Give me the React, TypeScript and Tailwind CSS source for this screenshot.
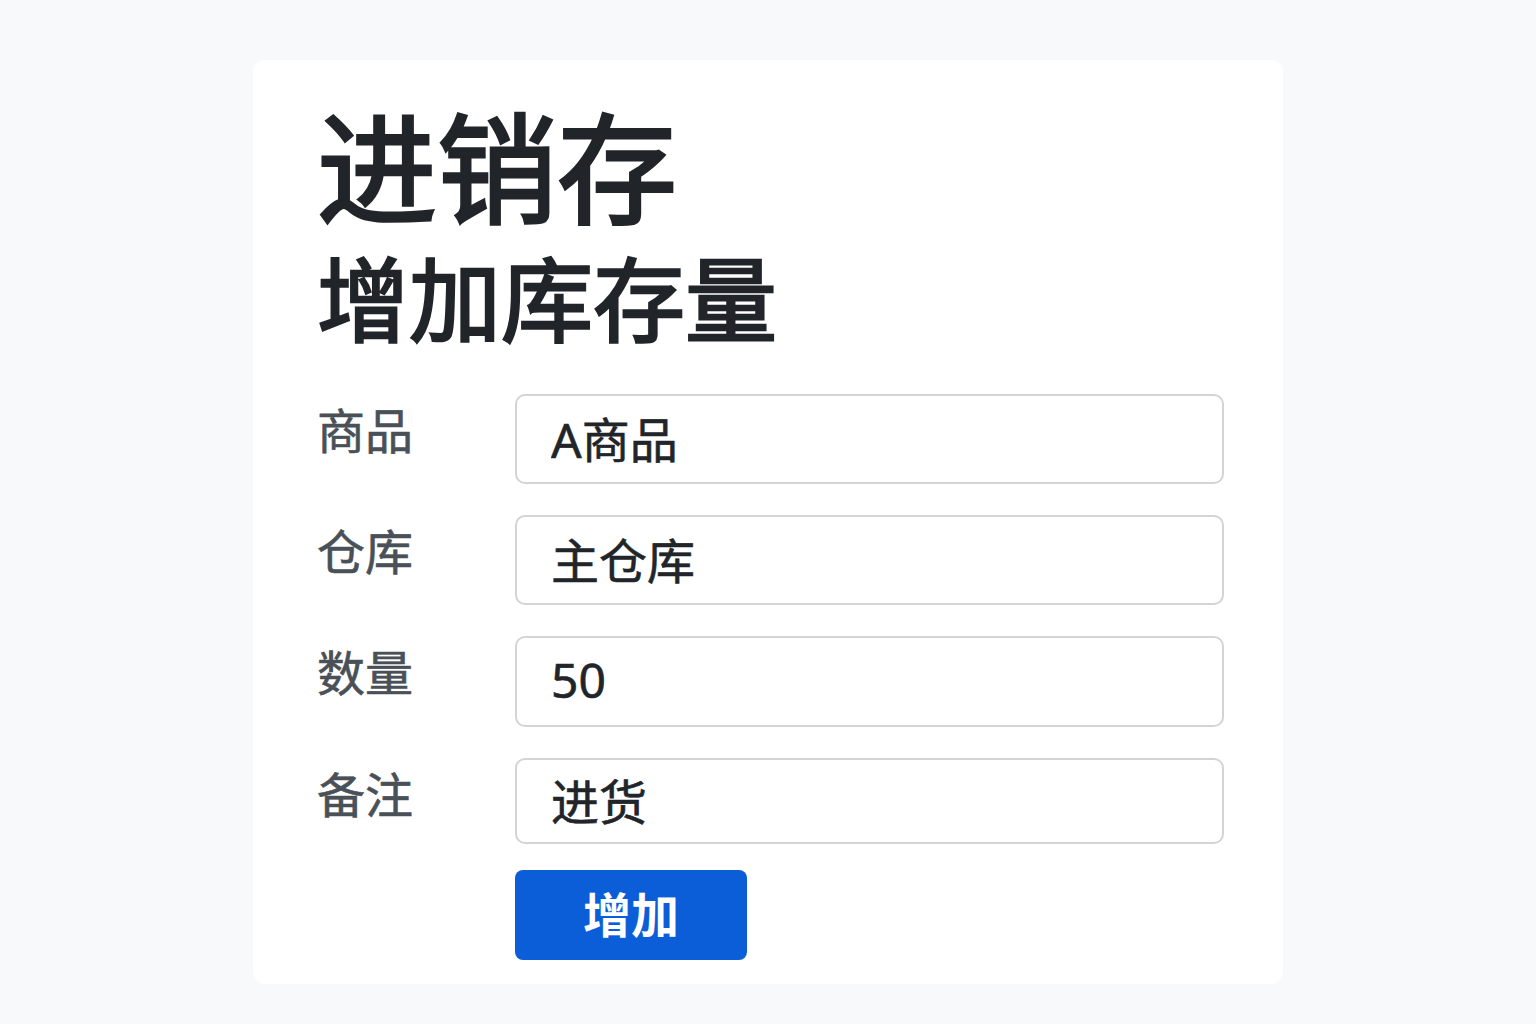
import { useState } from 'react'

const fields = [
  { label: '商品', value: 'A商品', h: 'h-[90px]' },
  { label: '仓库', value: '主仓库', h: 'h-[90px]' },
  { label: '数量', value: '50', h: 'h-[91px]' },
  { label: '备注', value: '进货', h: 'h-[86px]' },
]

export default function App() {
  const [values, setValues] = useState(fields.map((f) => f.value))

  return (
    <main className="min-h-screen bg-[#f8f9fa] pt-[60px] font-['Noto_Sans','Noto_Sans_CJK_SC',sans-serif]">
      <div className="w-[1030px] mx-auto bg-white rounded-xl pl-16 pr-[59px] pt-[31px] pb-[24px]">
        <h1 className="text-[120px] font-normal leading-[1.2] text-[#212529] [-webkit-text-stroke:3px_#212529] font-['Noto_Sans_CJK_SC',sans-serif]">
          进销存
        </h1>
        <h2 className="mt-[5px] text-[92px] font-normal leading-[1.2] text-[#212529] [-webkit-text-stroke:2.5px_#212529] font-['Noto_Sans_CJK_SC',sans-serif]">
          增加库存量
        </h2>

        <form
          className="mt-[44px] flex flex-col gap-[31px]"
          onSubmit={(e) => e.preventDefault()}
        >
          {fields.map((f, i) => (
            <div key={f.label} className="grid grid-cols-[198px_1fr] items-start">
              <label className="pt-[3px] text-[48px] leading-[1.4] text-[#495057] [-webkit-text-stroke:0.6px_#495057]">
                {f.label}
              </label>
              <input
                value={values[i]}
                onChange={(e) => {
                  const next = [...values]
                  next[i] = e.target.value
                  setValues(next)
                }}
                className={`${f.h} w-full border-2 border-[#d4d4d4] rounded-[10px] px-[34px] pb-[5px] text-[48px] text-[#212529] [-webkit-text-stroke:0.6px_#212529] outline-none`}
              />
            </div>
          ))}

          <div className="grid grid-cols-[198px_1fr] -mt-[5px]">
            <div />
            <button className="w-[232px] h-[90px] bg-[#0b5ed7] rounded-lg text-white text-[48px] font-bold">
              增加
            </button>
          </div>
        </form>
      </div>
    </main>
  )
}
